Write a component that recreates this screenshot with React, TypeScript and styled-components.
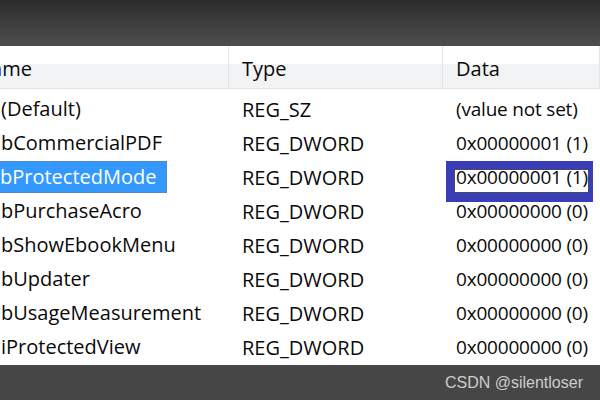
import React from 'react';
import styled, { createGlobalStyle } from 'styled-components';

const GlobalStyle = createGlobalStyle`
  html, body {
    margin: 0;
    padding: 0;
    background: #464646;
  }
`;

interface IRow {
  name: string,
  type: string,
  data: string,
  selected?: boolean,
}

const rows: IRow[] = [
  { name: '(Default)', type: 'REG_SZ', data: '(value not set)' },
  { name: 'bCommercialPDF', type: 'REG_DWORD', data: '0x00000001 (1)' },
  { name: 'bProtectedMode', type: 'REG_DWORD', data: '0x00000001 (1)', selected: true },
  { name: 'bPurchaseAcro', type: 'REG_DWORD', data: '0x00000000 (0)' },
  { name: 'bShowEbookMenu', type: 'REG_DWORD', data: '0x00000000 (0)' },
  { name: 'bUpdater', type: 'REG_DWORD', data: '0x00000000 (0)' },
  { name: 'bUsageMeasurement', type: 'REG_DWORD', data: '0x00000000 (0)' },
  { name: 'iProtectedView', type: 'REG_DWORD', data: '0x00000000 (0)' },
];

const Page = styled.div`
  width: 600px;
  height: 400px;
  display: flex;
  flex-direction: column;
  overflow: hidden;
  font-family: "Open Sans", "Noto Sans", sans-serif;
`;

const TopBar = styled.div`
  height: 46px;
  flex-shrink: 0;
  background: linear-gradient(#2c2c2c, #4e4e4e);
`;

const ListView = styled.div`
  flex: 1;
  background: #ffffff;
  overflow: hidden;
  color: #0a0a0a;
  font-size: 20px;
`;

const HeaderRow = styled.div`
  display: grid;
  grid-template-columns: 229px 214px 1fr;
  height: 42px;
  background: linear-gradient(#ffffff 0%, #ffffff 42%, #f2f3f5 43%, #f2f3f5 100%);
  border-bottom: 1px solid #e2e3e5;
`;

const HeaderCell = styled.div`
  display: flex;
  align-items: center;
  padding: 3px 0 0 13px;
  border-right: 1px solid #e3e4e6;
  white-space: nowrap;
  overflow: hidden;
`;

const ScrolledLabel = styled.span`
  margin-left: -37px;
`;

const Body = styled.div`
  padding-top: 3px;
`;

const Row = styled.div`
  display: grid;
  grid-template-columns: 229px 214px 1fr;
  height: 34px;
  align-items: center;
`;

const Cell = styled.div`
  position: relative;
  padding-left: 13px;
  white-space: nowrap;
`;

const DataCell = styled(Cell)`
  font-size: 19px;
  letter-spacing: -0.2px;
`;

const NameCell = styled.div`
  margin-left: -3px;
  white-space: nowrap;
`;

const NameText = styled.span<{ $selected?: boolean }>`
  display: inline-block;
  height: 32px;
  line-height: 30px;
  padding: 0 9px 0 3px;
  margin-left: ${(p) => (p.$selected ? '-1px' : '0')};
  background: ${(p) => (p.$selected ? '#3399ff' : 'transparent')};
  color: ${(p) => (p.$selected ? '#ffffff' : 'inherit')};
  box-sizing: border-box;
  border: 1px dotted ${(p) => (p.$selected ? '#7a7a7a' : 'transparent')};
`;

const Marker = styled.span`
  position: absolute;
  left: 3px;
  top: -3px;
  width: 147px;
  height: 41px;
  box-sizing: border-box;
  border: 0 solid #3a3eb6;
  border-width: 8px 4px 9px 8px;
  &::after {
    content: '';
    position: absolute;
    inset: 0;
    border: 1px solid #4a4a66;
  }
`;

const Footer = styled.div`
  height: 35px;
  flex-shrink: 0;
  background: #464646;
  display: flex;
  align-items: center;
  justify-content: flex-end;
  padding-right: 17px;
`;

const Watermark = styled.span`
  font-family: "Liberation Sans", Arial, sans-serif;
  font-size: 16px;
  color: #cdcdcd;
`;

export default function App() {
  return (
    <Page>
      <GlobalStyle />
      <TopBar />
      <ListView>
        <HeaderRow>
          <HeaderCell><ScrolledLabel>Name</ScrolledLabel></HeaderCell>
          <HeaderCell>Type</HeaderCell>
          <HeaderCell>Data</HeaderCell>
        </HeaderRow>
        <Body>
          {rows.map((r) => (
            <Row key={r.name}>
              <NameCell>
                <NameText $selected={r.selected}>{r.name}</NameText>
              </NameCell>
              <Cell>{r.type}</Cell>
              <DataCell>
                {r.selected && <Marker />}
                {r.data}
              </DataCell>
            </Row>
          ))}
        </Body>
      </ListView>
      <Footer>
        <Watermark>CSDN @silentloser</Watermark>
      </Footer>
    </Page>
  );
}
